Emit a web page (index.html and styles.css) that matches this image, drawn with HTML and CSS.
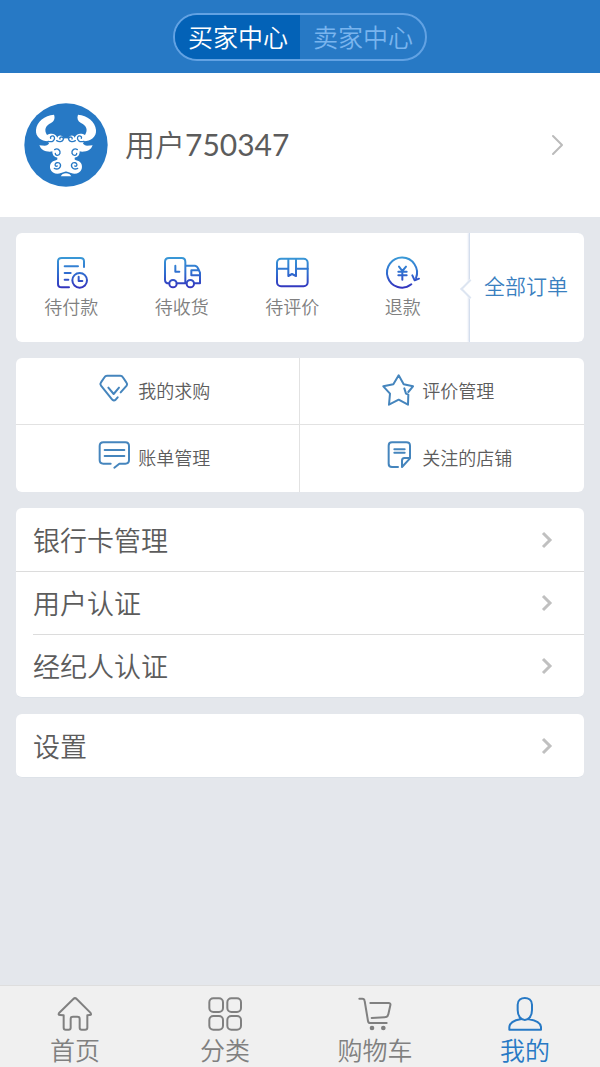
FILE: index.html
```html
<!DOCTYPE html>
<html lang="zh-CN">
<head>
<meta charset="utf-8">
<meta name="viewport" content="width=device-width, initial-scale=1">
<title>买家中心</title>
<link rel="stylesheet" href="styles.css">
</head>
<body>
<div class="page">
  <header class="topbar">
    <div class="switch">
      <button type="button" class="switch-item active">买家中心</button>
      <button type="button" class="switch-item">卖家中心</button>
    </div>
  </header>

  <a class="profile" href="#profile">
    <svg class="avatar" viewBox="29 23 252 252" aria-hidden="true">
      <defs>
        <g id="half">
          <path fill="#fff" d="M119 58C91 61 67 78 65 104C63 125 81 137 101 138L104 145Q98 151 92 151L75 150Q81 165 95 168Q108 170 114 168C114 180 119 185 129 187Q131 194 125 195C111 197 104 209 108 221C112 233 127 239 140 233L156 228V129Q149 131 147 128C144 119 132 118 129 127C124 112 107 113 98 119C88 103 94 91 110 83C120 77 123 68 119 58Z"/>
          <g fill="none" stroke="#2779c5" stroke-width="4" stroke-linecap="round">
            <path d="M101 138C116 142 123 133 120 125C116 119 106 122 109 129"/>
            <path d="M127 136C136 142 148 138 147 129C144 122 134 125 137 131"/>
            <path d="M121 163C130 157 139 165 137 174C134 183 122 181 123 174"/>
            <path d="M120 219C131 225 141 216 138 207C134 198 119 202 123 211Q125 214 129 212"/>
          </g>
        </g>
      </defs>
      <circle cx="155" cy="149" r="125" fill="#2779c5"/>
      <use href="#half"/>
      <use href="#half" transform="matrix(-1 0 0 1 310 0)"/>
      <path d="M144 237Q155 230 166 237L171 243H139Z" fill="#fff"/>
    </svg>
    <span class="username">用户<span class="digits">750347</span></span>
    <svg class="profile-arrow" viewBox="0 0 14 24" aria-hidden="true"><path d="M2 3L11 12L2 21"/></svg>
  </a>

  <main class="content">
    <section class="card orders">
      <nav class="order-states">
        <a class="order-state" href="#pay">
          <svg viewBox="129 87 114 114" aria-hidden="true">
            <defs><linearGradient id="fade" gradientUnits="userSpaceOnUse" x1="0" y1="95" x2="0" y2="190"><stop offset="0" stop-color="#3a9ad6"/><stop offset=".5" stop-color="#2f6fd0"/><stop offset="1" stop-color="#3432bd"/></linearGradient></defs>
            <path d="M225 126V109Q225 99 214 99H158Q147 99 147 109V177Q147 187 158 187H180M167 123.500H207M167 144H185M167 164H178"/>
            <circle cx="212" cy="166" r="22"/><path d="M209 155V168H220"/>
          </svg>
          <span>待付款</span>
        </a>
        <a class="order-state" href="#receive">
          <svg viewBox="461 87 114 114" aria-hidden="true">
            <path d="M479 175Q467 175 467 164V111Q467 99 479 99H517Q528 99 528 111V175M502 175H530M498 122V140H510M529 122H557Q564 123 567 132L572 143V175H555M569 136H546V151H571"/>
            <circle cx="491" cy="176" r="11"/><circle cx="543" cy="176" r="11"/>
          </svg>
          <span>待收货</span>
        </a>
        <a class="order-state" href="#review">
          <svg viewBox="100 87 114 114" aria-hidden="true">
            <rect x="112" y="101" width="92" height="83" rx="12"/>
            <path d="M112 131H145M170 131H204M146 102V153L157 147L169 153V102"/>
          </svg>
          <span>待评价</span>
        </a>
        <a class="order-state" href="#refund">
          <svg viewBox="432 87 114 114" aria-hidden="true">
            <path d="M514 178A45 45 0 1 1 528 159M517 151L524 166L537 161"/>
            <path d="M477 125L487 138L498 125M487 138V164M475 140H500M475 151H500"/>
          </svg>
          <span>退款</span>
        </a>
      </nav>
      <a class="all-orders" href="#orders">全部订单</a>
    </section>

    <nav class="card shortcuts">
      <a class="shortcut" href="#wanted">
        <svg viewBox="264 72 96 96" aria-hidden="true"><path d="M295 113L311 132L327 113M332 127L350 107Q353 102 349 97L338 81Q336 77 331 77H291Q286 77 284 81L273 97Q269 102 273 107L306 148Q311 154 317 149L323 142"/></svg>
        <span>我的求购</span>
      </a>
      <a class="shortcut" href="#reviews">
        <svg viewBox="243 72 96 96" aria-hidden="true"><path d="M310 115L315 131L322 134L321 164L293 149L264 164L267 131L247 109L277 103L293 76L308 103L336 109L322 126"/></svg>
        <span>评价管理</span>
      </a>
      <a class="shortcut" href="#bills">
        <svg viewBox="264 273 96 96" aria-hidden="true"><path d="M302 341H280Q269 341 269 330V288Q269 277 280 277H346Q357 277 357 288V330Q357 341 346 341H328L313 353M284 300H343M284 318H343"/></svg>
        <span>账单管理</span>
      </a>
      <a class="shortcut" href="#shops">
        <svg viewBox="243 273 96 96" aria-hidden="true"><path d="M291 351H273Q263 351 263 341V287Q263 277 273 277H316Q327 277 327 287V325L303 351V332Q303 324 310 324H325M280 298H311M280 308H311"/></svg>
        <span>关注的店铺</span>
      </a>
    </nav>

    <nav class="card list">
      <a class="row" href="#cards"><span>银行卡管理</span><svg viewBox="0 0 12 18" aria-hidden="true"><path d="M2 2L9 9L2 16"/></svg></a>
      <a class="row" href="#user-auth"><span>用户认证</span><svg viewBox="0 0 12 18" aria-hidden="true"><path d="M2 2L9 9L2 16"/></svg></a>
      <a class="row inset" href="#agent-auth"><span>经纪人认证</span><svg viewBox="0 0 12 18" aria-hidden="true"><path d="M2 2L9 9L2 16"/></svg></a>
    </nav>

    <nav class="card list">
      <a class="row" href="#settings"><span>设置</span><svg viewBox="0 0 12 18" aria-hidden="true"><path d="M2 2L9 9L2 16"/></svg></a>
    </nav>
  </main>

  <nav class="tabbar">
    <a class="tab" href="#home">
      <svg viewBox="171 62 108 108" aria-hidden="true"><path d="M180 119Q173 119 178 112L220 71Q225 66 230 71L271 112Q276 119 269 119L262 120V157Q262 163 255 163H245Q239 163 239 157V130Q239 124 232 124H219Q212 124 212 130V157Q212 163 206 163H197Q191 163 191 157V120Z"/></svg>
      <span>首页</span>
    </a>
    <a class="tab" href="#category">
      <svg viewBox="621 62 108 108" aria-hidden="true"><rect x="628" y="69" width="41" height="41" rx="12"/><rect x="682" y="69" width="41" height="41" rx="12"/><rect x="628" y="122" width="41" height="41" rx="12"/><rect x="682" y="122" width="41" height="41" rx="12"/></svg>
      <span>分类</span>
    </a>
    <a class="tab" href="#cart">
      <svg viewBox="171 62 108 108" aria-hidden="true"><path d="M178 70H187Q193 70 194 77L204 137Q205 143 211 143H260M211 83H265Q273 83 271 90L265 117Q263 126 254 126L215 128"/><circle class="wheel" cx="216" cy="158" r="7"/><circle class="wheel" cx="250" cy="158" r="7"/></svg>
      <span>购物车</span>
    </a>
    <a class="tab active" href="#me" aria-current="page">
      <svg viewBox="621 62 108 108" aria-hidden="true"><path d="M653 88C653 61 696 61 696 88V104C696 144 653 144 653 104ZM661 132C641 134 628 145 628 155V163H723V155C721 143 709 135 687 132"/></svg>
      <span>我的</span>
    </a>
  </nav>
</div>
</body>
</html>
```

FILE: styles.css
```css
* {
  box-sizing: border-box;
}

body {
  margin: 0;
  background: #e4e7ec;
  color: #5c5c5c;
  font-family: "Noto Sans CJK SC", sans-serif;
  font-weight: 350;
}

a {
  color: inherit;
  text-decoration: none;
}

svg {
  display: block;
  flex: none;
  fill: none;
  stroke-linecap: round;
  stroke-linejoin: round;
}

.page {
  display: flex;
  flex-direction: column;
  min-height: 100vh;
}

.topbar {
  display: flex;
  justify-content: center;
  padding: 13px 16px 12px;
  background: #2779c5;
}

.switch {
  display: flex;
  overflow: hidden;
  border: 2px solid #62a2e3;
  border-radius: 24px;
}

.switch-item {
  padding: 0 12px 2px 13px;
  border: 0;
  background: transparent;
  color: #79b4ee;
  font: inherit;
  font-size: 25px;
  line-height: 42px;
}

.switch-item.active {
  background: #0362b7;
  color: #fff;
}

.profile {
  display: flex;
  align-items: center;
  padding: 30px 35px 30px 24px;
  background: #fff;
}

.avatar {
  width: 84px;
  height: 84px;
}

.username {
  flex: 1;
  padding: 0 0 4px 17px;
  font-size: 30px;
  line-height: 40px;
}

.digits {
  font-family: Lato, sans-serif;
  font-weight: 400;
}

.profile-arrow {
  width: 14px;
  height: 24px;
  stroke: #bbb;
  stroke-width: 2;
}

.content {
  display: flex;
  flex: 1;
  flex-direction: column;
  gap: 16px;
  padding: 16px;
}

.card {
  border-radius: 6px;
  background: #fff;
}

.orders {
  display: flex;
}

.order-states {
  display: flex;
  flex: 1;
  padding: 21px 11px 24px 0;
}

.order-state {
  display: flex;
  flex: 1;
  flex-direction: column;
  align-items: center;
  gap: 2px;
  color: #808080;
  font-size: 18px;
  line-height: 24px;
}

.order-state svg {
  width: 38px;
  height: 38px;
  stroke: url(#fade);
  stroke-width: 6;
}

.all-orders {
  position: relative;
  display: flex;
  align-items: center;
  justify-content: center;
  width: 115px;
  padding: 0 2px 6px 0;
  border-left: 1px solid #d4deed;
  box-shadow: -1px 0 2px #e0e6f2;
  border-radius: 0 6px 6px 0;
  color: #3a80bf;
  font-size: 21px;
}

.all-orders::before {
  position: absolute;
  top: calc(50% - 6px);
  left: -7px;
  width: 12px;
  height: 12px;
  border: solid #dde5f1;
  border-width: 0 0 2px 2px;
  background: #fff;
  content: "";
  transform: rotate(45deg);
}

.shortcuts {
  display: grid;
  grid-template-columns: 1fr 1fr;
}

.shortcut {
  display: flex;
  align-items: center;
  gap: 8px;
  height: 67px;
  padding: 0 0 3px 29%;
  border-bottom: 1px solid #e2e2e2;
  font-size: 18px;
  white-space: nowrap;
}

.shortcut:nth-child(odd) {
  border-right: 1px solid #e2e2e2;
}

.shortcut:nth-child(n + 3) {
  border-bottom: 0;
}

.shortcut svg {
  width: 32px;
  height: 32px;
  stroke: #4585bd;
  stroke-width: 6;
}

.list {
  border-bottom: 1px solid #dde2e8;
}

.row {
  position: relative;
  display: flex;
  align-items: center;
  justify-content: space-between;
  padding: 12px 31px 12px 17px;
  font-size: 27px;
  line-height: 39px;
}

.row + .row::before {
  position: absolute;
  top: 0;
  right: 0;
  left: 0;
  height: 1px;
  background: #dcdcdc;
  content: "";
}

.row.inset::before {
  left: 17px;
}

.row svg {
  width: 12px;
  height: 18px;
  stroke: #c0c0c0;
  stroke-linecap: butt;
  stroke-linejoin: miter;
  stroke-width: 3;
}

.tabbar {
  position: sticky;
  bottom: 0;
  display: flex;
  border-top: 1px solid #dedede;
  background: #f0f0f0;
}

.tab {
  display: flex;
  flex: 1;
  flex-direction: column;
  align-items: center;
  padding: 10px 0 1px;
  color: #808080;
  font-size: 25px;
  line-height: 34px;
}

.tab.active {
  color: #2779c5;
}

.tab svg {
  width: 36px;
  height: 36px;
  stroke: currentColor;
  stroke-width: 6;
}

.tab .wheel {
  fill: currentColor;
  stroke: none;
}
```
